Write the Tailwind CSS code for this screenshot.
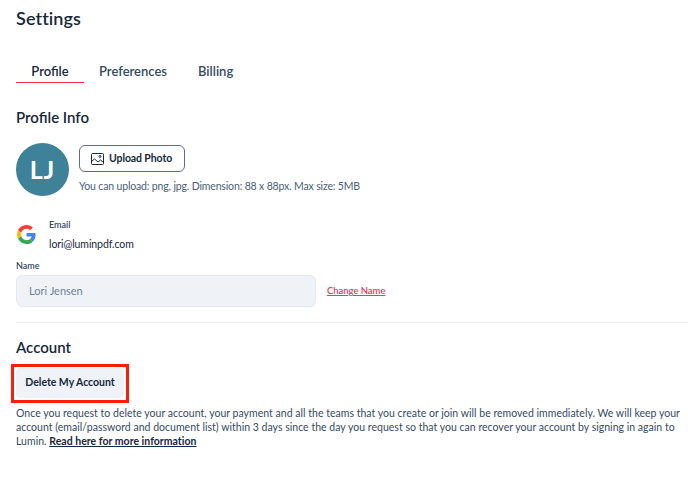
<!DOCTYPE html>
<html lang="en">
<head>
  <meta charset="UTF-8" />
  <title>Settings</title>
  <script src="https://cdn.jsdelivr.net/npm/@tailwindcss/browser@4"></script>
</head>
<body class="bg-white overflow-hidden font-['Lato',sans-serif] text-[#16283c]">
  <div class="relative w-[688px] h-[477px] pl-4 overflow-hidden">
    <h1 class="pt-[8px] h-[41px] text-[18px] leading-5 font-semibold tracking-[0.1px]">Settings</h1>

    <!-- tabs -->
    <nav class="flex mt-[11px] h-[30px] text-[13px] font-semibold">
      <a class="w-[68px] h-[31px] leading-[19px] pt-[10px] text-center border-b border-b-[#f0274d]">Profile</a>
      <a class="ml-[15px] pt-[10px] leading-[19px] text-[#344b63]">Preferences</a>
      <a class="ml-[31px] pt-[10px] leading-[19px] text-[#344b63]">Billing</a>
    </nav>

    <h2 class="mt-[25px] text-[15px] leading-5 font-semibold">Profile Info</h2>

    <div class="flex mt-[16px]">
      <div class="w-[53px] h-[53px] rounded-full bg-[#3e8299] text-white flex items-center justify-center text-[25px] font-bold tracking-[1px]">LJ</div>
      <div class="ml-[10px] pt-[2px]">
        <button class="flex items-center w-[106px] h-[27px] pl-[11px] rounded-md border border-[#5a6f85] text-[10.5px] font-bold tracking-[-0.1px] text-[#16283c]">
          <svg class="w-[13px] h-[12px] mr-[5px]" viewBox="0 0 13 12" fill="none" stroke="#16283c" stroke-width="1">
            <rect x="0.5" y="0.5" width="12" height="11" rx="1" />
            <path d="M0.5 8.5 L3.5 6 L7 9 L9.500 7 L12.500 9.500" />
            <circle cx="9" cy="3.500" r="1" />
          </svg>
          Upload Photo
        </button>
        <p class="mt-[7px] text-[10.5px] leading-[14px] text-[#4a5f75] tracking-[-0.15px]">You can upload: png, jpg. Dimension: 88 x 88px. Max size: 5MB</p>
      </div>
    </div>

    <div class="flex mt-[23px]">
      <svg class="w-[19px] h-[19px] ml-px mt-[6px]" viewBox="0 0 48 48">
        <path fill="#EA4335" d="M24 9.5c3.5 0 6.7 1.2 9.2 3.6l6.9-6.9C35.900 2.400 30.500 0 24 0 14.600 0 6.500 5.400 2.600 13.200l8 6.200C12.500 13.700 17.800 9.500 24 9.500z"/>
        <path fill="#4285F4" d="M47 24.500c0-1.600-.1-3.100-.4-4.500H24v9h12.900c-.6 3-2.200 5.500-4.700 7.200l7.700 6c4.500-4.200 7.100-10.300 7.100-17.700z"/>
        <path fill="#FBBC05" d="M10.600 28.600c-.5-1.400-.8-3-.8-4.600s.3-3.200.8-4.600l-8-6.200C.9 16.500 0 20.100 0 24s.9 7.500 2.600 10.800l8-6.200z"/>
        <path fill="#34A853" d="M24 48c6.500 0 11.900-2.100 15.900-5.800l-7.700-6c-2.200 1.400-4.900 2.300-8.200 2.300-6.200 0-11.500-4.200-13.400-9.900l-8 6.200C6.500 42.600 14.600 48 24 48z"/>
      </svg>
      <div class="ml-[13px]">
        <div class="text-[9px] leading-3 font-semibold text-[#344b63]">Email</div>
        <div class="mt-[6px] text-[10.5px] leading-[14px] text-[#16283c] tracking-[-0.08px]">lori@luminpdf.com</div>
      </div>
    </div>

    <label class="block mt-[9px] text-[9px] leading-3 font-semibold text-[#344b63]">Name</label>
    <div class="flex items-center mt-[3px]">
      <div class="w-[300px] h-[32px] pl-[12px] leading-[30px] rounded-md bg-[#eff3f7] border border-[#e2e8ee] text-[11px] text-[#6f8295]">Lori Jensen</div>
      <a class="ml-[11px] text-[9.5px] font-semibold text-[#ef3b5a] underline tracking-[-0.05px]">Change Name</a>
    </div>

    <div class="mt-[15px] h-px bg-[#e2e8ee]"></div>

    <h2 class="mt-[14px] text-[15px] leading-5 font-semibold">Account</h2>

    <button class="block mt-[11px] w-[108px] h-[30px] rounded bg-[#eff3f7] text-[10.5px] font-bold tracking-[-0.03px]">Delete My Account</button>

    <p class="mt-[8px] w-[668px] text-[10.5px] leading-[14px] tracking-[0.02px] text-[#344b63]">Once you request to delete your account, your payment and all the teams that you create or join will be removed immediately. We will keep your account (email/password and document list) within 3 days since the day you request so that you can recover your account by signing in again to Lumin. <a class="font-bold text-[#16283c] underline">Read here for more information</a></p>

    <!-- red annotation box -->
    <div class="absolute left-[11px] top-[364px] w-[118px] h-[39px] border-[3px] border-[#fb1d0a]"></div>
  </div>
</body>
</html>
